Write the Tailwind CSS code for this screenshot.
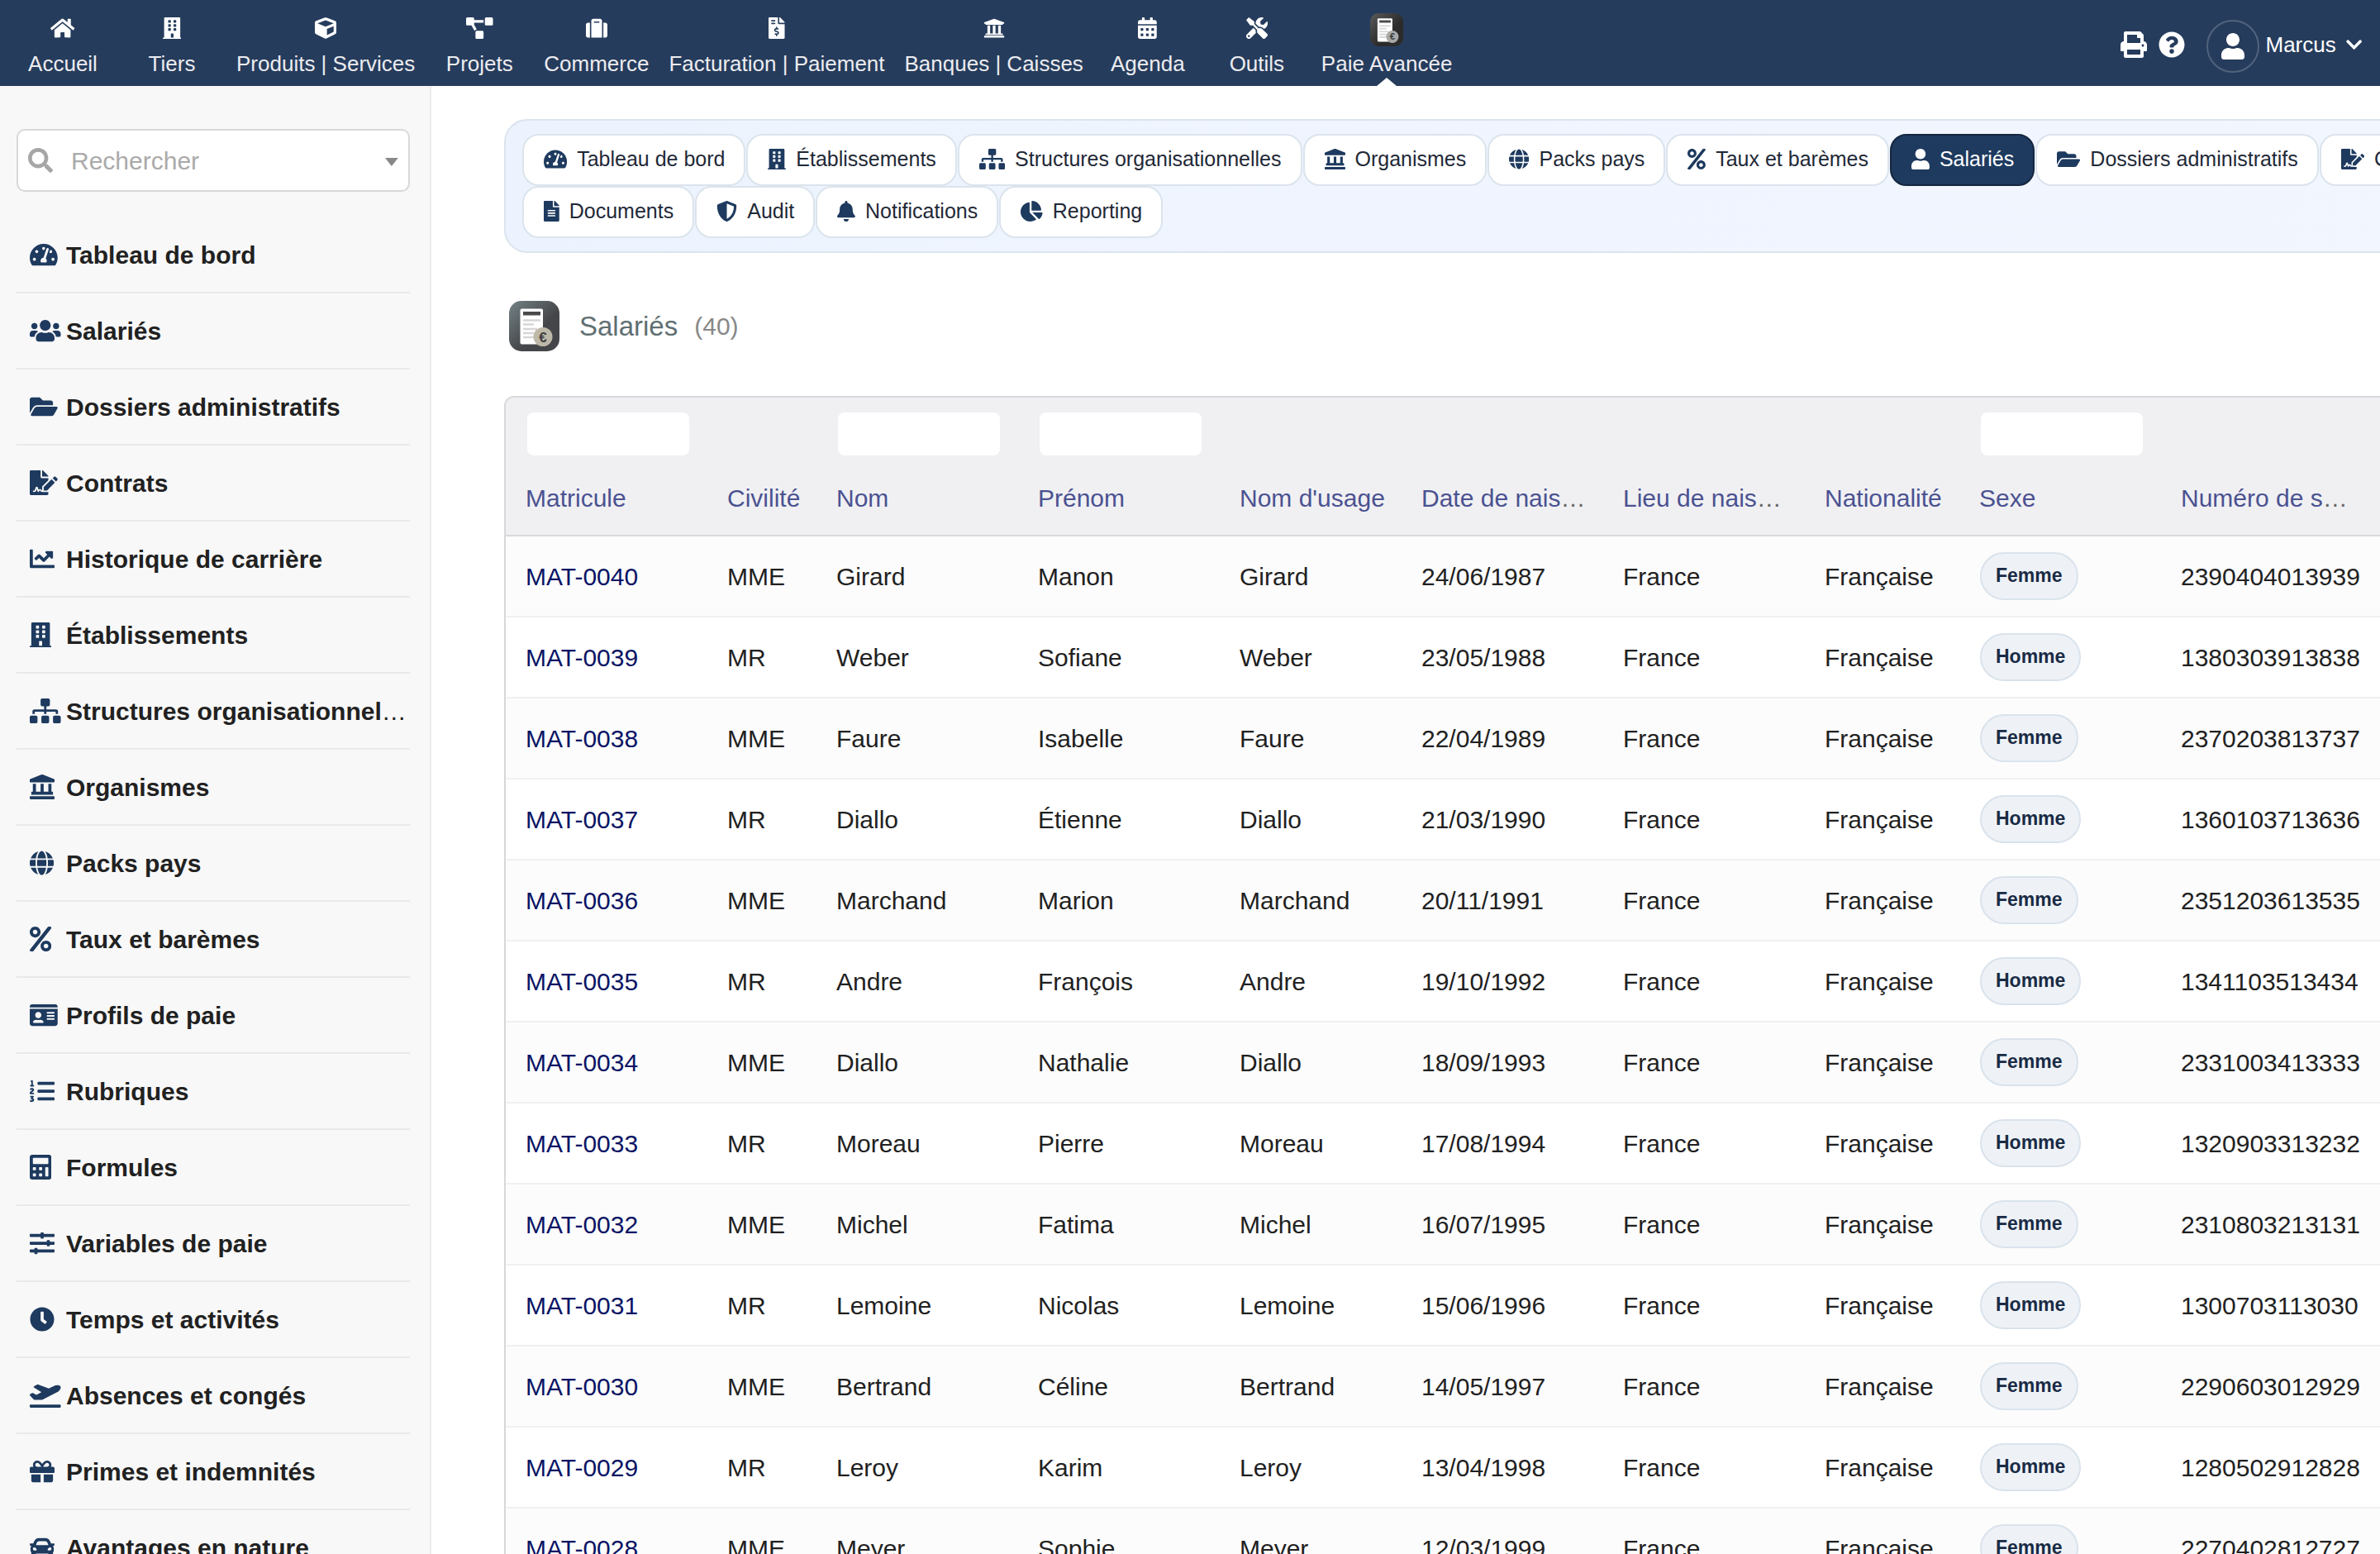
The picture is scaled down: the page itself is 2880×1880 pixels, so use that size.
<!DOCTYPE html>
<html lang="fr">
<head>
  <meta charset="UTF-8">
  <meta name="viewport" content="width=device-width, initial-scale=1.0">
  <title>Salariés - Paie Avancée</title>
  <script src="https://cdn.jsdelivr.net/npm/@tailwindcss/browser@4"></script>
</head>
<body class="flex h-screen flex-col overflow-hidden bg-white font-['Liberation_Sans',Arial,sans-serif] text-[#212121]">

  <!-- Barre du haut -->
  <header class="flex h-[104px] shrink-0 items-stretch justify-between bg-[#263c5c] pl-[10px] pr-[22px] text-white">
    <nav id="topNav" class="flex" aria-label="Menu principal"></nav>
    <div class="flex items-center pt-1">
      <button type="button" aria-label="Imprimer" data-icon="print" data-class="h-8 w-auto" class="mr-[14px]"></button>
      <button type="button" aria-label="Aide" data-icon="help" data-class="h-8 w-auto" class="mr-[26px]"></button>
      <button type="button" class="flex items-center text-[26px]">
        <span data-icon="user" data-class="h-8 w-auto" class="mt-1 mr-2 flex h-16 w-16 items-center justify-center rounded-full border-2 border-[#51637d]"></span>
        Marcus
        <span data-icon="chevron" data-class="h-[22px] w-auto" class="ml-3"></span>
      </button>
    </div>
  </header>

  <div class="flex min-h-0 grow">
    <!-- Menu de gauche -->
    <aside class="w-[522px] shrink-0 overflow-hidden border-r-2 border-[#ebebeb] bg-[#f8f8f8] px-5 pr-6 pt-[52px]">
      <div class="mb-[31px] flex h-[76px] items-center rounded-[10px] border-2 border-[#d8d8d8] bg-white pl-3 pr-3">
        <label for="search" aria-label="Rechercher" data-icon="search" data-class="h-[30px] w-auto" class="mr-[22px] text-[#a6a6a6]"></label>
        <input id="search" type="text" placeholder="Rechercher" class="min-w-0 grow text-[30px] outline-none placeholder:text-[#aaaaaa]">
        <svg viewBox="0 0 16 10" class="mt-1 h-[10px] w-4 fill-[#888888]"><path d="M0 0h16L8 10z"/></svg>
      </div>
      <nav id="sideNav" aria-label="Menu paie"></nav>
    </aside>

    <!-- Contenu -->
    <main class="min-w-0 grow overflow-hidden pl-[88px] pt-10">
      <nav id="tabs" aria-label="Sections" class="w-max min-w-full rounded-[28px] border-2 border-[#dbe4ec] bg-linear-to-r from-[#edf3fe] to-[#f2f6ff] px-5 py-4"></nav>

      <h1 class="mb-[54px] mt-[58px] flex items-center pl-[6px] text-[33px] text-[#5f6f72]">
        <span data-logo="title" class="mr-6"></span>
        Salariés
        <span class="ml-5 text-[30px] text-[#888888]">(40)</span>
      </h1>

      <div class="w-max min-w-full overflow-hidden rounded-t-[12px] border-2 border-[#d8d8d8]">
        <table class="w-max border-separate border-spacing-0 text-left text-[30px]">
          <colgroup>
            <col class="w-[244px]"><col class="w-[132px]"><col class="w-[244px]"><col class="w-[244px]"><col class="w-[220px]">
            <col class="w-[244px]"><col class="w-[244px]"><col class="w-[187px]"><col class="w-[244px]"><col class="w-[320px]">
          </colgroup>
          <thead class="bg-[#f0f0f3]">
            <tr id="filters"></tr>
            <tr id="titles"></tr>
          </thead>
          <tbody id="rows"></tbody>
        </table>
      </div>
    </main>
  </div>

  <script>
    // nom: [largeur du viewBox, tracé]
    const icons = {
      home: [576, 'M280.37 148.26L96 300.11V464a16 16 0 0 0 16 16l112.06-.29a16 16 0 0 0 15.92-16V368a16 16 0 0 1 16-16h64a16 16 0 0 1 16 16v95.64a16 16 0 0 0 16 16.05L464 480a16 16 0 0 0 16-16V300L295.67 148.26a12.19 12.19 0 0 0-15.3 0zM571.6 251.47L488 182.56V44.05a12 12 0 0 0-12-12h-56a12 12 0 0 0-12 12v72.61L318.47 43a48 48 0 0 0-61 0L4.34 251.47a12 12 0 0 0-1.6 16.9l25.5 31A12 12 0 0 0 45.15 301l235.22-193.74a12.19 12.19 0 0 1 15.3 0L530.9 301a12 12 0 0 0 16.9-1.6l25.5-31a12 12 0 0 0-1.7-16.93z'],
      building: [448, 'M436 480h-20V24c0-13.255-10.745-24-24-24H56C42.745 0 32 10.745 32 24v456H12c-6.627 0-12 5.373-12 12v20h448v-20c0-6.627-5.373-12-12-12zM128 76c0-6.627 5.373-12 12-12h40c6.627 0 12 5.373 12 12v40c0 6.627-5.373 12-12 12h-40c-6.627 0-12-5.373-12-12V76zm0 96c0-6.627 5.373-12 12-12h40c6.627 0 12 5.373 12 12v40c0 6.627-5.373 12-12 12h-40c-6.627 0-12-5.373-12-12v-40zm52 148h-40c-6.627 0-12-5.373-12-12v-40c0-6.627 5.373-12 12-12h40c6.627 0 12 5.373 12 12v40c0 6.627-5.373 12-12 12zm76 160h-64v-84c0-6.627 5.373-12 12-12h40c6.627 0 12 5.373 12 12v84zm64-172c0 6.627-5.373 12-12 12h-40c-6.627 0-12-5.373-12-12v-40c0-6.627 5.373-12 12-12h40c6.627 0 12 5.373 12 12v40zm0-96c0 6.627-5.373 12-12 12h-40c-6.627 0-12-5.373-12-12v-40c0-6.627 5.373-12 12-12h40c6.627 0 12 5.373 12 12v40zm0-96c0 6.627-5.373 12-12 12h-40c-6.627 0-12-5.373-12-12V76c0-6.627 5.373-12 12-12h40c6.627 0 12 5.373 12 12v40z'],
      cube: [512, 'M239.1 6.3l-208 78c-18.7 7-31.1 25-31.1 45v225.1c0 18.2 10.3 34.8 26.5 42.9l208 104c13.5 6.8 29.4 6.8 42.9 0l208-104c16.3-8.1 26.5-24.8 26.5-42.9V129.3c0-20-12.4-37.9-31.1-44.9l-208-78C262 2.2 250 2.2 239.1 6.3zM256 68.4l192 72v1.1l-192 78-192-78v-1.1l192-72zm32 356V275.5l160-65v133.9l-160 80z'],
      project: [640, 'M384 320H256c-17.67 0-32 14.33-32 32v128c0 17.67 14.33 32 32 32h128c17.67 0 32-14.33 32-32V352c0-17.67-14.33-32-32-32zM192 32c0-17.67-14.33-32-32-32H32C14.33 0 0 14.33 0 32v128c0 17.67 14.33 32 32 32h95.72l73.16 128.04C211.98 300.98 232.4 288 256 288h.28L192 175.51V128h224V64H192V32zM608 0H480c-17.67 0-32 14.33-32 32v128c0 17.67 14.33 32 32 32h128c17.67 0 32-14.33 32-32V32c0-17.67-14.33-32-32-32z'],
      suitcase: [512, 'M128 480h256V80c0-26.5-21.5-48-48-48H176c-26.5 0-48 21.5-48 48v400zm64-384h128v32H192V96zm320 80v256c0 26.5-21.5 48-48 48h-48V128h48c26.5 0 48 21.5 48 48zM96 480H48c-26.5 0-48-21.5-48-48V176c0-26.5 21.5-48 48-48h48v352z'],
      invoice: [384, 'M377 105L279.1 7c-4.5-4.5-10.6-7-17-7H256v128h128v-6.1c0-6.3-2.5-12.4-7-16.9zm-153 31V0H24C10.7 0 0 10.7 0 24v464c0 13.3 10.7 24 24 24h336c13.3 0 24-10.7 24-24V160H248c-13.2 0-24-10.8-24-24zM64 72c0-4.42 3.58-8 8-8h80c4.42 0 8 3.58 8 8v16c0 4.42-3.58 8-8 8H72c-4.42 0-8-3.58-8-8V72zm0 80v-16c0-4.42 3.58-8 8-8h80c4.42 0 8 3.58 8 8v16c0 4.42-3.58 8-8 8H72c-4.42 0-8-3.58-8-8zm144 263.88V440c0 4.42-3.58 8-8 8h-16c-4.42 0-8-3.58-8-8v-24.29c-11.29-.58-22.27-4.52-31.37-11.35-3.9-2.93-4.1-8.77-.57-12.14l11.75-11.21c2.77-2.64 6.89-2.76 10.13-.73 3.87 2.42 8.26 3.72 12.82 3.72h28.11c6.5 0 11.8-5.92 11.8-13.19 0-5.95-3.61-11.19-8.77-12.73l-45-13.5c-18.59-5.58-31.58-23.42-31.58-43.39 0-24.52 19.05-44.44 42.67-45.07V232c0-4.42 3.58-8 8-8h16c4.42 0 8 3.58 8 8v24.29c11.29.58 22.27 4.51 31.37 11.35 3.9 2.93 4.1 8.77.57 12.14l-11.75 11.21c-2.77 2.64-6.89 2.76-10.13.73-3.87-2.43-8.26-3.72-12.82-3.72h-28.11c-6.5 0-11.8 5.92-11.8 13.19 0 5.95 3.61 11.19 8.77 12.73l45 13.5c18.59 5.58 31.58 23.42 31.58 43.39 0 24.53-19.05 44.44-42.67 45.07z'],
      university: [512, 'M496 128v16a8 8 0 0 1-8 8h-24v12c0 6.627-5.373 12-12 12H60c-6.627 0-12-5.373-12-12v-12H24a8 8 0 0 1-8-8v-16a8 8 0 0 1 4.941-7.392l232-88a7.996 7.996 0 0 1 6.118 0l232 88A8 8 0 0 1 496 128zm-24 304H40c-13.255 0-24 10.745-24 24v16a8 8 0 0 0 8 8h464a8 8 0 0 0 8-8v-16c0-13.255-10.745-24-24-24zM96 192v192H60c-6.627 0-12 5.373-12 12v20h416v-20c0-6.627-5.373-12-12-12h-36V192h-64v192h-64V192h-64v192h-64V192H96z'],
      calendar: [448, 'M0 464c0 26.5 21.5 48 48 48h352c26.5 0 48-21.5 48-48V192H0v272zm320-196c0-6.6 5.4-12 12-12h40c6.6 0 12 5.4 12 12v40c0 6.6-5.4 12-12 12h-40c-6.6 0-12-5.4-12-12v-40zm0 128c0-6.6 5.4-12 12-12h40c6.6 0 12 5.4 12 12v40c0 6.6-5.4 12-12 12h-40c-6.6 0-12-5.4-12-12v-40zM192 268c0-6.6 5.4-12 12-12h40c6.6 0 12 5.4 12 12v40c0 6.6-5.4 12-12 12h-40c-6.6 0-12-5.4-12-12v-40zm0 128c0-6.6 5.4-12 12-12h40c6.6 0 12 5.4 12 12v40c0 6.6-5.4 12-12 12h-40c-6.6 0-12-5.4-12-12v-40zM64 268c0-6.6 5.4-12 12-12h40c6.6 0 12 5.4 12 12v40c0 6.6-5.4 12-12 12H76c-6.6 0-12-5.4-12-12v-40zm0 128c0-6.6 5.4-12 12-12h40c6.6 0 12 5.4 12 12v40c0 6.6-5.4 12-12 12H76c-6.6 0-12-5.4-12-12v-40zM400 64h-48V16c0-8.8-7.2-16-16-16h-32c-8.8 0-16 7.2-16 16v48H160V16c0-8.8-7.2-16-16-16h-32c-8.8 0-16 7.2-16 16v48H48C21.5 64 0 85.5 0 112v48h448v-48c0-26.5-21.5-48-48-48z'],
      tools: [512, 'M501.1 395.7L384 278.6c-23.1-23.1-57.6-27.6-85.4-13.9L192 158.1V96L64 0 0 64l96 128h62.1l106.6 106.6c-13.6 27.8-9.2 62.3 13.9 85.4l117.1 117.1c14.6 14.6 38.2 14.6 52.7 0l52.7-52.7c14.5-14.6 14.5-38.2 0-52.7zM331.7 225c28.3 0 54.9 11 74.9 31l19.4 19.4c15.8-6.9 30.8-16.5 43.8-29.5 37.1-37.1 49.7-89.3 37.9-136.7-2.2-9-13.5-12.1-20.1-5.5l-74.4 74.4-67.9-11.3L334 98.9l74.4-74.4c6.6-6.6 3.4-17.9-5.7-20.2-47.4-11.7-99.6.9-136.6 37.9-28.5 28.5-41.9 66.1-41.2 103.6l82.1 82.1c8.1-1.9 16.5-2.9 24.7-2.9zm-103.9 82l-56.7-56.7L18.7 402.8c-25 25-25 65.5 0 90.5s65.5 25 90.5 0l123.6-123.6c-7.6-19.9-9.9-41.6-5-62.7zM64 472c-13.2 0-24-10.8-24-24 0-13.3 10.7-24 24-24s24 10.7 24 24c0 13.2-10.7 24-24 24z'],
      print: [512, 'M448 192V77.25c0-8.49-3.37-16.62-9.37-22.63L393.37 9.37c-6-6-14.14-9.37-22.63-9.37H96C78.33 0 64 14.33 64 32v160c-35.35 0-64 28.65-64 64v112c0 8.84 7.16 16 16 16h48v96c0 17.67 14.33 32 32 32h320c17.67 0 32-14.33 32-32v-96h48c8.84 0 16-7.16 16-16V256c0-35.35-28.65-64-64-64zm-64 256H128v-96h256v96zm0-224H128V64h192v48c0 8.84 7.16 16 16 16h48v96zm48 72c-13.25 0-24-10.75-24-24 0-13.26 10.75-24 24-24s24 10.74 24 24c0 13.25-10.75 24-24 24z'],
      help: [512, 'M504 256c0 136.997-111.043 248-248 248S8 392.997 8 256C8 119.083 119.043 8 256 8s248 111.083 248 248zM262.655 90c-54.497 0-89.255 22.957-116.549 63.758-3.536 5.286-2.353 12.415 2.715 16.258l34.699 26.31c5.205 3.947 12.621 3.008 16.665-2.122 17.864-22.658 30.113-35.797 57.303-35.797 20.429 0 45.698 13.148 45.698 32.958 0 14.976-12.363 22.667-32.534 33.976C247.128 238.528 216 254.941 216 296v4c0 6.627 5.373 12 12 12h56c6.627 0 12-5.373 12-12v-1.333c0-28.462 83.186-29.647 83.186-106.667 0-58.002-60.165-102-116.531-102zM256 338c-25.365 0-46 20.635-46 46 0 25.364 20.635 46 46 46s46-20.636 46-46c0-25.365-20.635-46-46-46z'],
      user: [448, 'M224 256c70.7 0 128-57.3 128-128S294.7 0 224 0 96 57.3 96 128s57.3 128 128 128zm89.6 32h-16.7c-22.2 10.2-46.9 16-72.9 16s-50.6-5.8-72.9-16h-16.7C60.2 288 0 348.2 0 422.4V464c0 26.5 21.5 48 48 48h352c26.5 0 48-21.5 48-48v-41.6c0-74.2-60.2-134.4-134.4-134.4z'],
      chevron: [448, 'M207.029 381.476L12.686 187.132c-9.373-9.373-9.373-24.569 0-33.941l22.667-22.667c9.357-9.357 24.522-9.375 33.901-.04L224 284.505l154.745-154.021c9.379-9.335 24.544-9.317 33.901.04l22.667 22.667c9.373 9.373 9.373 24.569 0 33.941L240.971 381.476c-9.373 9.372-24.569 9.372-33.942 0z'],
      search: [512, 'M505 442.7L405.3 343c-4.5-4.5-10.6-7-17-7H372c27.6-35.3 44-79.7 44-128C416 93.1 322.9 0 208 0S0 93.1 0 208s93.1 208 208 208c48.3 0 92.7-16.4 128-44v16.3c0 6.4 2.5 12.5 7 17l99.7 99.7c9.4 9.4 24.6 9.4 33.9 0l28.3-28.3c9.4-9.4 9.4-24.6.1-34zM208 336c-70.7 0-128-57.2-128-128 0-70.7 57.2-128 128-128 70.7 0 128 57.2 128 128 0 70.7-57.2 128-128 128z'],
      gauge: [576, 'M288 32C128.94 32 0 160.94 0 320c0 52.8 14.25 102.26 39.06 144.8 5.61 9.62 16.3 15.2 27.44 15.2h443c11.14 0 21.83-5.58 27.44-15.2C561.75 422.26 576 372.8 576 320c0-159.06-128.94-288-288-288zm0 64c14.71 0 26.58 10.13 30.32 23.65-1.11 2.26-2.64 4.23-3.45 6.67l-9.22 27.67c-5.13 3.49-10.97 6.01-17.64 6.01-17.67 0-32-14.33-32-32S270.33 96 288 96zM96 384c-17.67 0-32-14.33-32-32s14.33-32 32-32 32 14.33 32 32-14.33 32-32 32zm48-160c-17.67 0-32-14.33-32-32s14.33-32 32-32 32 14.33 32 32-14.33 32-32 32zm246.77-72.41l-61.33 184C343.13 347.33 352 364.54 352 384c0 11.72-3.38 22.55-8.88 32H232.88c-5.5-9.45-8.88-20.28-8.88-32 0-33.94 26.5-61.43 59.9-63.59l61.34-184.01c4.17-12.56 17.73-19.45 30.36-15.17 12.57 4.19 19.35 17.79 15.17 30.36zm14.66 57.2l15.52-46.55c3.47-1.29 7.13-2.23 11.05-2.23 17.67 0 32 14.33 32 32s-14.33 32-32 32c-11.38-.01-20.89-6.28-26.57-15.22zM480 384c-17.67 0-32-14.33-32-32s14.33-32 32-32 32 14.33 32 32-14.33 32-32 32z'],
      users: [640, 'M96 224c35.3 0 64-28.7 64-64s-28.7-64-64-64-64 28.7-64 64 28.7 64 64 64zm448 0c35.3 0 64-28.7 64-64s-28.7-64-64-64-64 28.7-64 64 28.7 64 64 64zm32 32h-64c-17.6 0-33.5 7.1-45.1 18.6 40.3 22.1 68.9 62 75.1 109.4h66c17.7 0 32-14.3 32-32v-32c0-35.3-28.7-64-64-64zm-256 0c61.9 0 112-50.1 112-112S381.9 32 320 32 208 82.1 208 144s50.1 112 112 112zm76.8 32h-8.3c-20.8 10-43.9 16-68.5 16s-47.6-6-68.5-16h-8.3C179.6 288 128 339.6 128 403.2V432c0 26.5 21.5 48 48 48h288c26.5 0 48-21.5 48-48v-28.8c0-63.6-51.6-115.2-115.2-115.2zm-223.7-13.4C161.5 263.1 145.6 256 128 256H64c-35.3 0-64 28.7-64 64v32c0 17.7 14.3 32 32 32h65.9c6.3-47.4 34.9-87.3 75.2-109.4z'],
      folder: [576, 'M572.694 292.093L500.27 416.248A63.997 63.997 0 0 1 444.989 448H45.025c-18.523 0-30.064-20.093-20.731-36.093l72.424-124.155A64 64 0 0 1 152 256h399.964c18.523 0 30.064 20.093 20.73 36.093zM152 224h328v-48c0-26.51-21.49-48-48-48H272l-64-64H48C21.49 64 0 85.49 0 112v278.046l69.077-118.418C86.214 242.25 117.989 224 152 224z'],
      signature: [576, 'M218.17 424.14c-2.95-5.92-8.09-6.52-10.17-6.52s-7.22.59-10.02 6.19l-7.67 15.34c-6.37 12.78-25.03 11.37-29.48-2.09L144 386.59l-10.61 31.88c-5.89 17.66-22.38 29.53-41 29.53H80c-8.84 0-16-7.16-16-16s7.16-16 16-16h12.39c4.83 0 9.11-3.08 10.64-7.66l18.19-54.64c3.3-9.81 12.44-16.41 22.78-16.41s19.48 6.59 22.77 16.41l13.88 41.64c19.75-16.19 54.06-9.7 66 14.16 1.89 3.78 5.49 5.95 9.36 6.26v-82.12l128-127.09V160H248c-13.2 0-24-10.8-24-24V0H24C10.7 0 0 10.7 0 24v464c0 13.3 10.7 24 24 24h336c13.3 0 24-10.7 24-24v-40l-128-.11c-16.12-.31-30.58-9.28-37.83-23.75zM384 121.9c0-6.3-2.5-12.4-7-16.9L279.1 7c-4.5-4.5-10.6-7-17-7H256v128h128v-6.1zm-96 225.06V416h68.99l161.68-162.78-67.88-67.88L288 346.96zm280.54-179.63l-31.87-31.87c-9.94-9.94-26.07-9.94-36.01 0l-27.25 27.25 67.88 67.88 27.25-27.25c9.95-9.94 9.95-26.07 0-36.01z'],
      chart: [512, 'M496 384H64V80c0-8.84-7.16-16-16-16H16C7.16 64 0 71.16 0 80v336c0 17.67 14.33 32 32 32h464c8.84 0 16-7.16 16-16v-32c0-8.84-7.16-16-16-16zM464 96H345.94c-21.38 0-32.09 25.85-16.97 40.97l32.4 32.4L288 242.75l-73.37-73.37c-12.5-12.5-32.76-12.5-45.25 0l-68.69 68.69c-6.25 6.25-6.25 16.38 0 22.63l22.62 22.62c6.25 6.25 16.38 6.25 22.63 0L192 237.25l73.37 73.37c12.5 12.5 32.76 12.5 45.25 0l96-96 32.4 32.4c15.12 15.12 40.97 4.41 40.97-16.97V112c.01-8.84-7.15-16-15.99-16z'],
      sitemap: [640, 'M128 352H32c-17.67 0-32 14.33-32 32v96c0 17.67 14.33 32 32 32h96c17.67 0 32-14.33 32-32v-96c0-17.67-14.33-32-32-32zm-24-80h192v48h48v-48h192v48h48v-57.59c0-21.17-17.23-38.41-38.41-38.41H344v-64h40c17.67 0 32-14.33 32-32V32c0-17.67-14.33-32-32-32H256c-17.67 0-32 14.33-32 32v96c0 17.67 14.33 32 32 32h40v64H94.41C73.23 224 56 241.23 56 262.41V320h48v-48zm264 80h-96c-17.67 0-32 14.33-32 32v96c0 17.67 14.33 32 32 32h96c17.67 0 32-14.33 32-32v-96c0-17.67-14.33-32-32-32zm240 0h-96c-17.67 0-32 14.33-32 32v96c0 17.67 14.33 32 32 32h96c17.67 0 32-14.33 32-32v-96c0-17.67-14.33-32-32-32z'],
      landmark: [512, 'M501.62 92.11L267.24 2.04a31.958 31.958 0 0 0-22.47 0L10.38 92.11A16.001 16.001 0 0 0 0 107.09V144c0 8.84 7.16 16 16 16h480c8.84 0 16-7.16 16-16v-36.91c0-6.67-4.14-12.64-10.38-14.98zM64 192v160H48c-8.84 0-16 7.16-16 16v48h448v-48c0-8.84-7.16-16-16-16h-16V192h-64v160h-96V192h-64v160h-96V192H64zm432 256H16c-8.84 0-16 7.16-16 16v32c0 8.84 7.16 16 16 16h480c8.84 0 16-7.16 16-16v-32c0-8.84-7.16-16-16-16z'],
      globe: [496, 'M336.5 160C322 70.7 287.8 8 248 8s-74 62.7-88.5 152h177zM152 256c0 22.2 1.2 43.5 3.3 64h185.3c2.1-20.5 3.3-41.8 3.3-64s-1.2-43.5-3.3-64H155.3c-2.1 20.5-3.3 41.8-3.3 64zm324.7-96c-28.6-67.9-86.5-120.4-158-141.6 24.4 33.8 41.2 84.7 50 141.6h108zM177.2 18.4C105.8 39.6 47.8 92.1 19.3 160h108c8.7-56.9 25.5-107.8 49.9-141.6zM487.4 192H372.7c2.1 21 3.3 42.5 3.3 64s-1.2 43-3.3 64h114.6c5.5-20.5 8.6-41.8 8.6-64s-3.1-43.5-8.5-64zM120 256c0-21.5 1.2-43 3.3-64H8.6C3.2 212.5 0 233.8 0 256s3.2 43.5 8.6 64h114.6c-2-21-3.2-42.5-3.2-64zm39.5 96c14.5 89.3 48.7 152 88.5 152s74-62.7 88.5-152h-177zm159.3 141.6c71.4-21.2 129.4-73.7 158-141.6h-108c-8.8 56.9-25.6 107.8-50 141.6zM19.3 352c28.6 67.9 86.5 120.4 158 141.6-24.4-33.8-41.2-84.7-50-141.6h-108z'],
      percent: [448, 'M112 224c61.9 0 112-50.1 112-112S173.9 0 112 0 0 50.1 0 112s50.1 112 112 112zm0-160c26.5 0 48 21.5 48 48s-21.5 48-48 48-48-21.5-48-48 21.5-48 48-48zm224 224c-61.9 0-112 50.1-112 112s50.1 112 112 112 112-50.1 112-112-50.1-112-112-112zm0 160c-26.5 0-48-21.5-48-48s21.5-48 48-48 48 21.5 48 48-21.5 48-48 48zM392.3.2l31.6-.1c19.4-.1 30.9 21.8 19.7 37.8L77.4 501.6a23.95 23.95 0 0 1-19.6 10.2l-33.4.1c-19.5 0-30.9-21.9-19.7-37.8l368-463.7C377.2 4 384.5.2 392.3.2z'],
      card: [576, 'M528 32H48C21.5 32 0 53.5 0 80v16h576V80c0-26.5-21.5-48-48-48zM0 432c0 26.5 21.5 48 48 48h480c26.5 0 48-21.5 48-48V128H0v304zm352-232c0-4.4 3.6-8 8-8h144c4.4 0 8 3.6 8 8v16c0 4.4-3.6 8-8 8H360c-4.4 0-8-3.6-8-8v-16zm0 64c0-4.4 3.6-8 8-8h144c4.4 0 8 3.6 8 8v16c0 4.4-3.6 8-8 8H360c-4.4 0-8-3.6-8-8v-16zm0 64c0-4.4 3.6-8 8-8h144c4.4 0 8 3.6 8 8v16c0 4.4-3.6 8-8 8H360c-4.4 0-8-3.6-8-8v-16zM176 192c35.3 0 64 28.7 64 64s-28.7 64-64 64-64-28.7-64-64 28.7-64 64-64zM67.1 396.2C75.5 370.5 99.6 352 128 352h8.2c12.3 5.1 25.7 8 39.8 8s27.6-2.9 39.8-8h8.2c28.4 0 52.5 18.5 60.9 44.2 3.2 9.9-5.2 19.8-15.6 19.8H82.7c-10.4 0-18.8-10-15.6-19.8z'],
      list: [512, 'M61.77 401l17.5-20.15a19.92 19.92 0 0 0 5.07-14.19v-3.31C84.34 356 80.5 352 73 352H16a8 8 0 0 0-8 8v16a8 8 0 0 0 8 8h22.83a157.41 157.41 0 0 0-11 12.31l-5.61 7c-4 5.07-5.25 10.13-2.8 14.88l1.05 1.93c3 5.76 6.29 7.88 12.25 7.88h4.73c10.33 0 15.94 2.44 15.94 9.09 0 4.72-4.2 8.22-14.36 8.22a41.54 41.54 0 0 1-15.47-3.12c-6.49-3.88-11.74-3.5-15.6 3.12l-5.59 9.31c-3.72 6.13-3.19 11.72 2.63 15.94 7.71 4.69 20.38 9.44 37 9.44 34.16 0 48.5-22.75 48.5-44.12-.03-14.38-9.12-29.76-28.73-34.88zM496 224H176a16 16 0 0 0-16 16v32a16 16 0 0 0 16 16h320a16 16 0 0 0 16-16v-32a16 16 0 0 0-16-16zm0-160H176a16 16 0 0 0-16 16v32a16 16 0 0 0 16 16h320a16 16 0 0 0 16-16V80a16 16 0 0 0-16-16zm0 320H176a16 16 0 0 0-16 16v32a16 16 0 0 0 16 16h320a16 16 0 0 0 16-16v-32a16 16 0 0 0-16-16zM16 160h64a8 8 0 0 0 8-8v-16a8 8 0 0 0-8-8H64V40a8 8 0 0 0-8-8H32a8 8 0 0 0-7.14 4.42l-8 16A8 8 0 0 0 24 64h8v64H16a8 8 0 0 0-8 8v16a8 8 0 0 0 8 8zm-3.91 160H80a8 8 0 0 0 8-8v-16a8 8 0 0 0-8-8H41.32c3.29-10.29 48.34-18.68 48.34-56.44 0-29.06-25-39.56-44.47-39.56-21.36 0-33.8 10-40.46 18.75-4.37 5.59-3 10.84 2.8 15.37l8.58 6.88c5.61 4.56 11 2.47 16.12-2.44a13.44 13.44 0 0 1 9.46-3.84c3.33 0 9.28 1.56 9.28 8.75C51 248.19 0 257.31 0 304.59v4C0 316 5.08 320 12.09 320z'],
      calculator: [448, 'M400 0H48C22.4 0 0 22.4 0 48v416c0 25.6 22.4 48 48 48h352c25.6 0 48-22.4 48-48V48c0-25.6-22.4-48-48-48zM128 435.2c0 6.4-6.4 12.8-12.8 12.8H76.8c-6.4 0-12.8-6.4-12.8-12.8v-38.4c0-6.4 6.4-12.8 12.8-12.8h38.4c6.4 0 12.8 6.4 12.8 12.8v38.4zm0-128c0 6.4-6.4 12.8-12.8 12.8H76.8c-6.4 0-12.8-6.4-12.8-12.8v-38.4c0-6.4 6.4-12.8 12.8-12.8h38.4c6.4 0 12.8 6.4 12.8 12.8v38.4zm128 128c0 6.4-6.4 12.8-12.8 12.8h-38.4c-6.4 0-12.8-6.4-12.8-12.8v-38.4c0-6.4 6.4-12.8 12.8-12.8h38.4c6.4 0 12.8 6.4 12.8 12.8v38.4zm0-128c0 6.4-6.4 12.8-12.8 12.8h-38.4c-6.4 0-12.8-6.4-12.8-12.8v-38.4c0-6.4 6.4-12.8 12.8-12.8h38.4c6.4 0 12.8 6.4 12.8 12.8v38.4zm128 128c0 6.4-6.4 12.8-12.8 12.8h-38.4c-6.4 0-12.8-6.4-12.8-12.8V268.8c0-6.4 6.4-12.8 12.8-12.8h38.4c6.4 0 12.8 6.4 12.8 12.8v166.4zm0-256c0 6.4-6.4 12.8-12.8 12.8H76.8c-6.4 0-12.8-6.4-12.8-12.8V76.8C64 70.4 70.4 64 76.8 64h294.4c6.4 0 12.8 6.4 12.8 12.8v102.4z'],
      sliders: [512, 'M496 384H160v-16c0-8.8-7.2-16-16-16h-32c-8.8 0-16 7.2-16 16v16H16c-8.8 0-16 7.2-16 16v32c0 8.8 7.2 16 16 16h80v16c0 8.8 7.2 16 16 16h32c8.8 0 16-7.2 16-16v-16h336c8.8 0 16-7.2 16-16v-32c0-8.8-7.2-16-16-16zm0-160h-80v-16c0-8.8-7.2-16-16-16h-32c-8.8 0-16 7.2-16 16v16H16c-8.8 0-16 7.2-16 16v32c0 8.8 7.2 16 16 16h336v16c0 8.8 7.2 16 16 16h32c8.8 0 16-7.2 16-16v-16h80c8.8 0 16-7.2 16-16v-32c0-8.8-7.2-16-16-16zm0-160H288V48c0-8.8-7.2-16-16-16h-32c-8.8 0-16 7.2-16 16v16H16C7.2 64 0 71.2 0 80v32c0 8.8 7.2 16 16 16h208v16c0 8.8 7.2 16 16 16h32c8.8 0 16-7.2 16-16v-16h208c8.8 0 16-7.2 16-16V80c0-8.8-7.2-16-16-16z'],
      clock: [512, 'M256,8C119,8,8,119,8,256S119,504,256,504,504,393,504,256,393,8,256,8Zm92.49,313h0l-20,25a16,16,0,0,1-22.49,2.5h0l-67-49.72a40,40,0,0,1-15-31.23V112a16,16,0,0,1,16-16h32a16,16,0,0,1,16,16V256l58,42.5A16,16,0,0,1,348.49,321Z'],
      plane: [640, 'M624 448H16c-8.84 0-16 7.16-16 16v32c0 8.84 7.16 16 16 16h608c8.84 0 16-7.16 16-16v-32c0-8.84-7.16-16-16-16zM80.55 341.27c6.28 6.84 15.1 10.72 24.33 10.71l130.54-.18a65.62 65.62 0 0 0 29.64-7.12l290.96-147.65c26.74-13.57 50.71-32.94 67.02-58.31 18.31-28.48 20.3-49.09 13.07-63.65-7.21-14.57-24.74-25.27-58.25-27.45-29.85-1.94-59.54 5.92-86.28 19.48l-98.51 49.99-218.7-82.06a17.799 17.799 0 0 0-18-1.11L90.62 67.29c-10.67 5.41-13.25 19.65-5.17 28.53l156.22 98.1-103.21 52.38-72.35-36.47a17.804 17.804 0 0 0-16.07.02L9.91 230.22c-10.44 5.3-13.19 19.12-5.57 28.08l76.21 82.97z'],
      gift: [512, 'M32 448c0 17.7 14.3 32 32 32h160V320H32v128zm256 32h160c17.7 0 32-14.3 32-32V320H288v160zm192-320h-42.1c6.2-12.1 10.1-25.5 10.1-40 0-48.5-39.5-88-88-88-41.6 0-68.5 21.3-103 68.3-34.5-47-61.4-68.3-103-68.3-48.5 0-88 39.5-88 88 0 14.5 3.8 27.9 10.1 40H32c-17.7 0-32 14.3-32 32v80c0 8.8 7.2 16 16 16h480c8.8 0 16-7.2 16-16v-80c0-17.7-14.3-32-32-32zm-326.1 0c-22.1 0-40-17.9-40-40s17.9-40 40-40c19.9 0 34.6 3.3 86.1 80h-86.1zm206.1 0h-86.1c51.4-76.5 65.7-80 86.1-80 22.1 0 40 17.9 40 40s-17.9 40-40 40z'],
      car: [512, 'M499.99 176h-59.87l-16.64-41.6C406.38 91.63 365.57 64 319.5 64h-127c-46.06 0-86.88 27.63-103.99 70.4L71.87 176H12.01C4.2 176-1.53 183.34.37 190.91l6 24C7.7 220.25 12.5 224 18.01 224h20.07C24.65 235.73 16 252.78 16 272v48c0 16.12 6.16 30.67 16 41.93V416c0 17.67 14.33 32 32 32h32c17.67 0 32-14.33 32-32v-32h256v32c0 17.67 14.33 32 32 32h32c17.67 0 32-14.33 32-32v-54.07c9.84-11.25 16-25.8 16-41.93v-48c0-19.22-8.65-36.27-22.07-48H494c5.51 0 10.31-3.75 11.64-9.09l6-24c1.89-7.57-3.84-14.91-11.65-14.91zm-352.06-17.83c7.29-18.22 24.94-30.17 44.57-30.17h127c19.63 0 37.28 11.95 44.57 30.17L384 208H128l19.93-49.83zM96 319.8c-19.2 0-32-12.76-32-31.9S76.8 256 96 256s48 28.71 48 47.85-28.8 15.95-48 15.95zm320 0c-19.2 0-48 3.19-48-15.95S396.8 256 416 256s32 12.76 32 31.9-12.8 31.9-32 31.9z'],
      file: [384, 'M224 136V0H24C10.7 0 0 10.7 0 24v464c0 13.3 10.7 24 24 24h336c13.3 0 24-10.7 24-24V160H248c-13.2 0-24-10.8-24-24zm64 236c0 6.6-5.4 12-12 12H108c-6.6 0-12-5.4-12-12v-8c0-6.6 5.4-12 12-12h168c6.6 0 12 5.4 12 12v8zm0-64c0 6.6-5.4 12-12 12H108c-6.6 0-12-5.4-12-12v-8c0-6.6 5.4-12 12-12h168c6.6 0 12 5.4 12 12v8zm0-72v8c0 6.6-5.4 12-12 12H108c-6.6 0-12-5.4-12-12v-8c0-6.6 5.4-12 12-12h168c6.6 0 12 5.4 12 12zm96-114.1v6.1H256V0h6.1c6.4 0 12.5 2.5 17 7l97.9 98c4.5 4.5 7 10.6 7 16.9z'],
      shield: [512, 'M466.5 83.7l-192-80a48.15 48.15 0 0 0-36.9 0l-192 80C27.7 91.1 16 108.6 16 128c0 198.5 114.5 335.7 221.5 380.3 11.8 4.9 25.1 4.9 36.9 0C360.1 472.6 496 349.3 496 128c0-19.4-11.7-36.9-29.5-44.3zM256.1 446.3l-.1-381 175.9 73.3c-3.3 151.4-82.1 261.1-175.8 307.7z'],
      bell: [448, 'M224 512c35.32 0 63.97-28.65 63.97-64H160.03c0 35.35 28.65 64 63.97 64zm215.39-149.71c-19.32-20.76-55.47-51.99-55.47-154.29 0-77.7-54.48-139.9-127.94-155.16V32c0-17.67-14.32-32-31.98-32s-31.98 14.33-31.98 32v20.84C118.56 68.1 64.08 130.3 64.08 208c0 102.3-36.15 133.53-55.47 154.29-6 6.45-8.66 14.16-8.61 21.71.11 16.4 12.98 32 32.1 32h383.8c19.12 0 32-15.6 32.1-32 .05-7.55-2.61-15.27-8.61-21.71z'],
      pie: [544, 'M527.79 288H290.5l158.03 158.03c6.04 6.04 15.98 6.53 22.19.68 38.7-36.46 65.32-85.61 73.13-140.86 1.34-9.46-6.51-17.85-16.06-17.85zm-15.83-64.8C503.72 103.74 408.26 8.28 288.8.04 279.68-.59 272 7.1 272 16.24V240h223.77c9.14 0 16.82-7.68 16.19-16.8zM224 288V50.71c0-9.55-8.39-17.4-17.84-16.06C86.99 51.49-4.1 155.6.14 280.37 4.5 408.51 114.83 513.59 243.03 511.98c50.4-.63 96.97-16.87 135.26-44.03 7.9-5.6 8.42-17.23 1.57-24.08L224 288z']
    };

    function icon(name, cls) {
      const [w, d] = icons[name];
      return `<svg viewBox="0 0 ${w} 512" fill="currentColor" aria-hidden="true" class="shrink-0 ${cls}"><path d="${d}"/></svg>`;
    }

    // Logo du module (bulletin + pièce)
    function logo(id, cls, from, to, coin) {
      return `<svg viewBox="0 0 61 61" aria-hidden="true" class="${cls}">
        <defs><linearGradient id="${id}" x1="0" y1="0" x2="1" y2="1"><stop offset="0" stop-color="${from}"/><stop offset=".6" stop-color="${to}"/><stop offset="1" stop-color="${to}"/></linearGradient></defs>
        <rect width="61" height="61" rx="15" fill="url(#${id})"/>
        <rect x="13.500" y="9.500" width="27.500" height="43" rx="2" fill="#fff"/>
        <rect x="17" y="13" width="21" height="4.500" fill="#4a4a4d"/>
        <path d="M17 23.500h21M17 28.500h13M17 34h17M17 39h13M17 44h13" stroke="#d6d6d6" stroke-width="2.500"/>
        <circle cx="41" cy="43.500" r="11.500" fill="${coin}"/>
        <text x="41" y="49.500" text-anchor="middle" font-size="17" font-weight="bold" fill="#3d3d3d">€</text>
      </svg>`;
    }

    const topItems = [
      ['home', 'Accueil'], ['building', 'Tiers'], ['cube', 'Produits | Services'], ['project', 'Projets'],
      ['suitcase', 'Commerce'], ['invoice', 'Facturation | Paiement'], ['university', 'Banques | Caisses'],
      ['calendar', 'Agenda'], ['tools', 'Outils'], [null, 'Paie Avancée']
    ];
    document.getElementById('topNav').innerHTML = topItems.map(([ico, label]) => `
      <a href="#" class="relative flex min-w-[132px] flex-col items-center px-3 text-[26px] leading-[30px] text-[#ececf0]">
        <span class="flex h-[62px] items-center pt-[6px] text-white">${ico ? icon(ico, 'h-[26px] w-auto') : logo('g-nav', 'mt-1 h-10 w-10', '#5a5a5a', '#2b2b2b', '#a8a8a8')}</span>
        ${label}
        ${ico ? '' : '<svg viewBox="0 0 24 10" class="absolute bottom-0 h-[10px] w-6 fill-white"><path d="M0 10L12 0l12 10z"/></svg>'}
      </a>`).join('');

    const sideItems = [
      ['gauge', 'Tableau de bord'], ['users', 'Salariés'], ['folder', 'Dossiers administratifs'], ['signature', 'Contrats'],
      ['chart', 'Historique de carrière'], ['building', 'Établissements'], ['sitemap', 'Structures organisationnelles'],
      ['landmark', 'Organismes'], ['globe', 'Packs pays'], ['percent', 'Taux et barèmes'], ['card', 'Profils de paie'],
      ['list', 'Rubriques'], ['calculator', 'Formules'], ['sliders', 'Variables de paie'], ['clock', 'Temps et activités'],
      ['plane', 'Absences et congés'], ['gift', 'Primes et indemnités'], ['car', 'Avantages en nature']
    ];
    document.getElementById('sideNav').innerHTML = sideItems.map(([ico, label]) => `
      <div class="flex h-[92px] items-center border-b-2 border-[#e9e9e9] pl-4 text-[30px]">
        <span class="w-11 shrink-0 text-[#1e3a5f]">${icon(ico, 'h-[30px] w-auto')}</span>
        <div class="truncate"><a href="#" class="font-bold">${label}</a></div>
      </div>`).join('');

    const tabRows = [
      [['gauge', 'Tableau de bord'], ['building', 'Établissements'], ['sitemap', 'Structures organisationnelles'], ['landmark', 'Organismes'],
       ['globe', 'Packs pays'], ['percent', 'Taux et barèmes'], ['user', 'Salariés'], ['folder', 'Dossiers administratifs'], ['signature', 'Contrats']],
      [['file', 'Documents'], ['shield', 'Audit'], ['bell', 'Notifications'], ['pie', 'Reporting']]
    ];
    document.getElementById('tabs').innerHTML = tabRows.map(row => `
      <div class="flex gap-px">${row.map(([ico, label]) => {
        const on = label === 'Salariés';
        return `<a href="#" class="flex h-[63px] items-center gap-3 rounded-[20px] border-2 pl-6 pr-[23px] pb-[2px] text-[25px] whitespace-nowrap ${on ? 'border-[#14263f] bg-[#1e3a5f] text-white' : 'border-[#dbe4ec] bg-white text-[#1f2937]'}">
          <span class="${on ? 'text-white' : 'text-[#1e3a5f]'}">${icon(ico, 'h-[25px] w-auto')}</span>${label}</a>`;
      }).join('')}</div>`).join('');

    const columns = ['Matricule', 'Civilité', 'Nom', 'Prénom', "Nom d'usage", 'Date de naissance', 'Lieu de naissance', 'Nationalité', 'Sexe', 'Numéro de sécurité sociale'];
    const filtered = ['Matricule', 'Nom', 'Prénom', 'Sexe'];
    document.getElementById('filters').innerHTML = columns.map(c => `
      <td class="h-20 pl-6 pr-4 pt-[18px] align-top">${filtered.includes(c) ? `<input type="text" aria-label="Filtrer ${c}" class="ml-[2px] block h-[52px] w-[196px] rounded-lg bg-white px-2">` : ''}</td>`).join('');
    document.getElementById('titles').innerHTML = columns.map(c => `
      <th scope="col" class="h-[88px] border-b-2 border-[#d8d8d8] pl-6 pr-4 pb-1 font-normal whitespace-nowrap"><div class="max-w-[204px] truncate text-[#666666]"><a href="#" class="text-[#4b5291]">${c}</a></div></th>`).join('');

    const employees = [
      ['MAT-0040', 'MME', 'Girard', 'Manon', '24/06/1987', '2390404013939'],
      ['MAT-0039', 'MR', 'Weber', 'Sofiane', '23/05/1988', '1380303913838'],
      ['MAT-0038', 'MME', 'Faure', 'Isabelle', '22/04/1989', '2370203813737'],
      ['MAT-0037', 'MR', 'Diallo', 'Étienne', '21/03/1990', '1360103713636'],
      ['MAT-0036', 'MME', 'Marchand', 'Marion', '20/11/1991', '2351203613535'],
      ['MAT-0035', 'MR', 'Andre', 'François', '19/10/1992', '1341103513434'],
      ['MAT-0034', 'MME', 'Diallo', 'Nathalie', '18/09/1993', '2331003413333'],
      ['MAT-0033', 'MR', 'Moreau', 'Pierre', '17/08/1994', '1320903313232'],
      ['MAT-0032', 'MME', 'Michel', 'Fatima', '16/07/1995', '2310803213131'],
      ['MAT-0031', 'MR', 'Lemoine', 'Nicolas', '15/06/1996', '1300703113030'],
      ['MAT-0030', 'MME', 'Bertrand', 'Céline', '14/05/1997', '2290603012929'],
      ['MAT-0029', 'MR', 'Leroy', 'Karim', '13/04/1998', '1280502912828'],
      ['MAT-0028', 'MME', 'Meyer', 'Sophie', '12/03/1999', '2270402812727']
    ];
    document.getElementById('rows').innerHTML = employees.map(([mat, civ, nom, prenom, naissance, numero]) => {
      const sexe = civ === 'MME' ? 'Femme' : 'Homme';
      const badge = `<span class="ml-px inline-flex h-[58px] items-center rounded-full border-2 border-[#dae3ec] bg-[#eef2f7] px-[17px] pb-[2px] align-middle text-[23px] font-bold text-[#1a2b45]">${sexe}</span>`;
      const cells = [`<a href="#" class="text-[#0a1464]">${mat}</a>`, civ, nom, prenom, nom, naissance, 'France', 'Française', badge, numero];
      return `<tr class="odd:bg-[#fcfcfc]">${cells.map(c => `<td class="h-[98px] border-b-2 border-[#f0f0f0] pl-6 pr-4 whitespace-nowrap">${c}</td>`).join('')}</tr>`;
    }).join('');

    document.querySelectorAll('[data-icon]').forEach(el => {
      el.innerHTML = icon(el.dataset.icon, el.dataset.class);
    });
    document.querySelector('[data-logo]').innerHTML = logo('g-title', 'h-[61px] w-[61px]', '#748286', '#454649', '#bdb8a8');
  </script>
</body>
</html>
